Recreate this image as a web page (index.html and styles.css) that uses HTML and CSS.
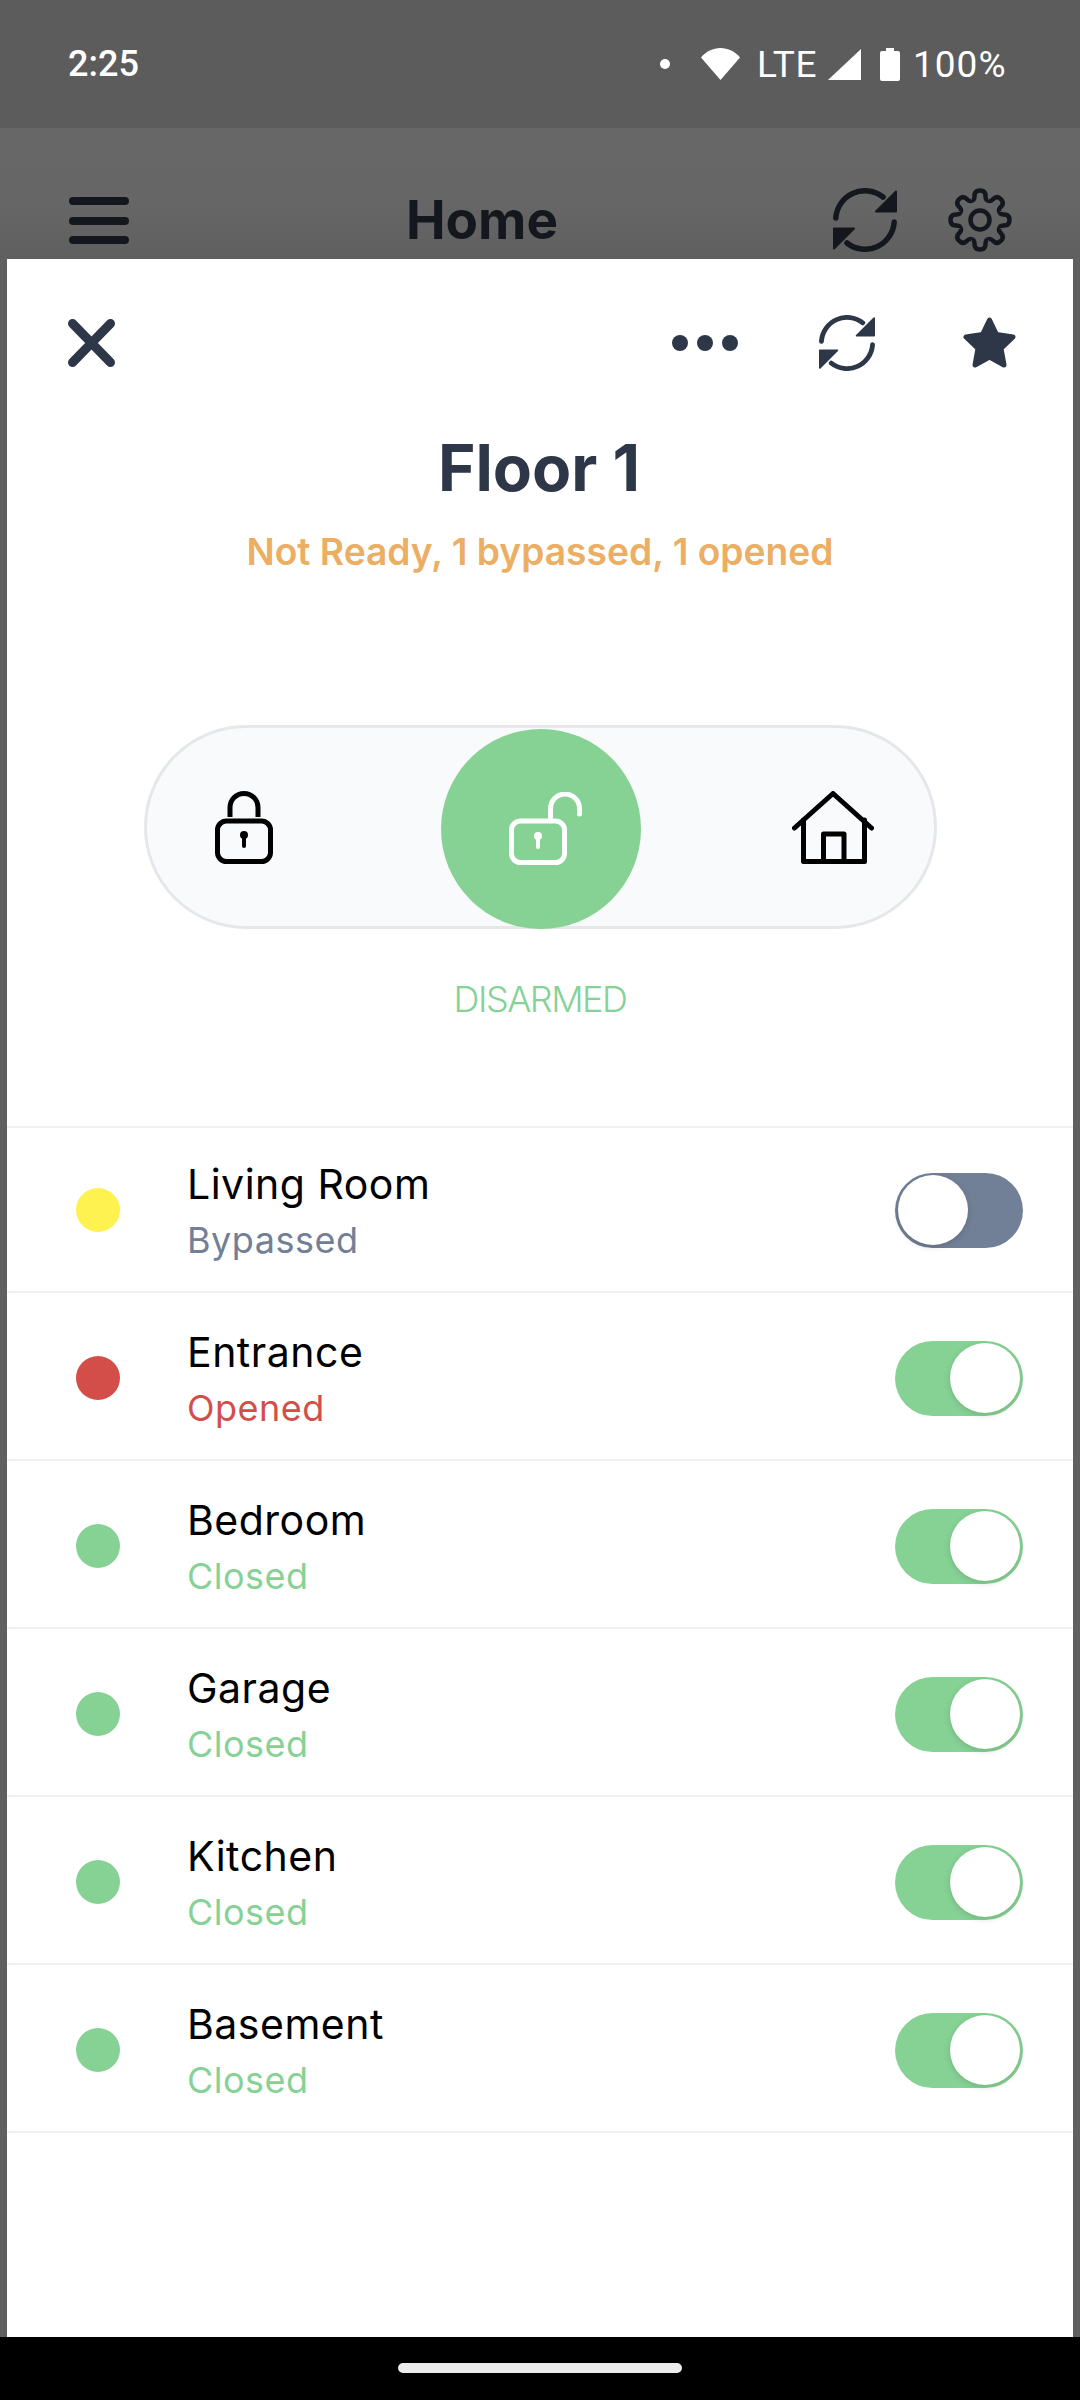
FILE: index.html
```html
<!DOCTYPE html>
<html lang="en">
<head>
<meta charset="utf-8">
<title>Floor 1</title>
<link rel="stylesheet" href="styles.css">
</head>
<body>
<div class="screen">
  <div class="statusbar">
    <span class="time">2:25</span>
    <div class="status-right">
      <span class="notif-dot"></span>
      <svg class="ic-wifi" viewBox="0 0 39 32"><path d="M19.5 32 0 9.5C5 3.500 12 0 19.500 0S34 3.500 39 9.500Z" fill="#fff"/></svg>
      <span class="lte">LTE</span>
      <svg class="ic-signal" viewBox="0 0 33 31"><path d="M33 0V31H0Z" fill="#fff"/></svg>
      <svg class="ic-battery" viewBox="0 0 20 33"><path d="M6 0h8v3h4a2 2 0 0 1 2 2v26a2 2 0 0 1-2 2H2a2 2 0 0 1-2-2V5a2 2 0 0 1 2-2h4Z" fill="#fff"/></svg>
      <span class="pct">100%</span>
    </div>
  </div>

  <div class="appbar">
    <div class="hamburger"><span></span><span></span><span></span></div>
    <span class="app-title">Home</span>
    <svg class="ic-sync-lg" viewBox="0 0 64 64"><use href="#sync"/></svg>
    <svg class="ic-gear" viewBox="0 0 64 64" fill="none" stroke="#14171e" stroke-width="4.500" stroke-linejoin="round">
      <circle cx="32" cy="32" r="9.500"/>
      <g id="gear-teeth">
        <path id="t" d="M24 12.600C26.500 12 26.500 10.500 26.500 8Q26.500 2.500 32 2.500T37.500 8C37.500 10.500 37.500 12 40 12.600"/>
        <use href="#t" transform="rotate(45 32 32)"/>
        <use href="#t" transform="rotate(90 32 32)"/>
        <use href="#t" transform="rotate(135 32 32)"/>
        <use href="#t" transform="rotate(180 32 32)"/>
        <use href="#t" transform="rotate(225 32 32)"/>
        <use href="#t" transform="rotate(270 32 32)"/>
        <use href="#t" transform="rotate(315 32 32)"/>
      </g>
    </svg>
  </div>

  <div class="sheet-wrap">
    <main class="sheet">
      <div class="toolbar">
        <svg class="ic-close" viewBox="0 0 47 48"><path d="M4.500 4.500 42.500 43.500M42.500 4.500 4.500 43.500" stroke="#2d3748" stroke-width="9" stroke-linecap="round"/></svg>
        <div class="dots"><span></span><span></span><span></span></div>
        <svg class="ic-sync" viewBox="0 0 64 64"><use href="#sync"/></svg>
        <svg class="ic-star" viewBox="0 0 53 51"><path d="M26.500 3 33.500 17.500 50 20 38 31.500 41 48 26.500 40 12 48 15 31.500 3 20 19.500 17.500Z" fill="#2d3748" stroke="#2d3748" stroke-width="5" stroke-linejoin="round"/></svg>
      </div>

      <h1 class="title">Floor 1</h1>
      <p class="subtitle">Not Ready, 1 bypassed, 1 opened</p>

      <div class="pill">
        <svg class="ic-lock" viewBox="0 0 58 73" fill="none" stroke="#000" stroke-width="5">
          <rect x="2.500" y="30" width="53" height="40.500" rx="9"/>
          <path d="M15 26V16.500a14 14 0 0 1 28 0V26" stroke-linecap="butt"/>
          <circle cx="29" cy="44" r="4" fill="#000" stroke="none"/>
          <path d="M29 45V55" stroke-width="4" stroke-linecap="round"/>
        </svg>
        <div class="pill-active">
          <svg class="ic-unlock" viewBox="0 0 74 73" fill="none" stroke="#fff" stroke-width="5">
            <rect x="2.500" y="29" width="53" height="41.500" rx="9"/>
            <path d="M41.500 25V16.500a14.500 14.500 0 0 1 29 0V22" stroke-linecap="round"/>
            <circle cx="29" cy="44" r="4" fill="#fff" stroke="none"/>
            <path d="M29 45V55" stroke-width="4" stroke-linecap="round"/>
          </svg>
        </div>
        <svg class="ic-home" viewBox="0 0 82 73" fill="none" stroke="#000" stroke-width="5" stroke-linejoin="round" stroke-linecap="round">
          <path d="M2.500 37 41 2.500 79.500 37"/>
          <path d="M11.500 29V70.500H72.500V29"/>
          <path d="M31.500 70.500V43H52V70.500"/>
        </svg>
      </div>
      <p class="mode">DISARMED</p>

      <ul class="zones">
        <li class="zone bypassed"><span class="dot"></span><div class="zone-text"><span class="zone-name">Living Room</span><span class="zone-state">Bypassed</span></div><span class="toggle"><span class="knob"></span></span></li>
        <li class="zone opened"><span class="dot"></span><div class="zone-text"><span class="zone-name">Entrance</span><span class="zone-state">Opened</span></div><span class="toggle"><span class="knob"></span></span></li>
        <li class="zone closed"><span class="dot"></span><div class="zone-text"><span class="zone-name">Bedroom</span><span class="zone-state">Closed</span></div><span class="toggle"><span class="knob"></span></span></li>
        <li class="zone closed"><span class="dot"></span><div class="zone-text"><span class="zone-name">Garage</span><span class="zone-state">Closed</span></div><span class="toggle"><span class="knob"></span></span></li>
        <li class="zone closed"><span class="dot"></span><div class="zone-text"><span class="zone-name">Kitchen</span><span class="zone-state">Closed</span></div><span class="toggle"><span class="knob"></span></span></li>
        <li class="zone closed"><span class="dot"></span><div class="zone-text"><span class="zone-name">Basement</span><span class="zone-state">Closed</span></div><span class="toggle"><span class="knob"></span></span></li>
      </ul>
    </main>
  </div>

  <div class="navbar"><span class="handle"></span></div>
</div>

<svg class="defs" width="0" height="0">
  <symbol id="sync" viewBox="0 0 64 64">
    <g fill="none" stroke="currentColor" stroke-width="5.500" stroke-linecap="round">
      <path d="M2.800 30A29.200 29.200 0 0 1 50 9"/>
      <path d="M61.200 34A29.200 29.200 0 0 1 14 55"/>
    </g>
    <g fill="currentColor" stroke="currentColor" stroke-width="2" stroke-linejoin="round">
      <path d="M63 3.500V23.500H43Z"/>
      <path d="M1 60.500V40.500H21Z"/>
    </g>
  </symbol>
</svg>
</body>
</html>
```
FILE: styles.css
```css
* { box-sizing: border-box; margin: 0; padding: 0; }
html, body { width: 1080px; height: 2400px; background: #000; overflow: hidden; }
body { font-family: "Inter", "Liberation Sans", sans-serif; }
.defs { position: absolute; }

.screen { width: 1080px; height: 2400px; display: flex; flex-direction: column; }

/* status bar */
.statusbar { height: 128px; background: #5c5c5c; color: #fff; display: flex; align-items: center; justify-content: space-between; padding: 0 76px 0 68px; font-family: "Roboto", sans-serif; font-size: 37px; }
.status-right { display: flex; align-items: center; }
.time { font-size: 36px; font-weight: 500; }
.notif-dot { width: 10px; height: 10px; border-radius: 50%; background: #fff; }
.ic-wifi { width: 39px; height: 32px; margin-left: 31px; }
.lte { margin-left: 17px; width: 60px; font-size: 37px; line-height: 1; letter-spacing: .7px; }
.ic-signal { width: 33px; height: 31px; margin-left: 11px; }
.ic-battery { width: 20px; height: 33px; margin-left: 19px; }
.pct { margin-left: 13px; width: 91px; line-height: 1; letter-spacing: 1px; }

/* dimmed app bar */
.appbar { height: 131px; flex: none; background: linear-gradient(#676767, #666 60%, #5f5f5f); display: flex; align-items: flex-start; padding: 60px 0 0 69px; overflow: hidden; color: #14171e; }
.hamburger { width: 60px; height: 47px; margin-top: 9px; display: flex; flex-direction: column; justify-content: space-between; }
.hamburger span { display: block; height: 8px; border-radius: 4px; background: #14171e; }
.app-title { margin-left: 277px; width: 151px; font-size: 53px; font-weight: 700; line-height: 64px; white-space: nowrap; }
.ic-sync-lg { width: 64px; height: 64px; margin-left: 276px; color: #14171e; }
.ic-gear { width: 64px; height: 64px; margin-left: 51px; }

/* sheet */
.sheet-wrap { flex: 1; background: #5f5f5f; padding: 0 7px; display: flex; min-height: 0; }
.sheet { flex: 1; background: #fff; display: flex; flex-direction: column; }

.toolbar { height: 167px; flex: none; display: flex; align-items: center; padding-left: 61px; color: #2d3748; }
.ic-close { width: 47px; height: 48px; }
.dots { display: flex; gap: 9px; margin-left: 557px; }
.dots span { width: 16px; height: 16px; border-radius: 50%; background: #2d3748; }
.ic-sync { width: 56px; height: 56px; margin-left: 81px; }
.ic-star { width: 53px; height: 51px; margin-left: 88px; }

.title { font-size: 64px; line-height: 84px; font-weight: 700; color: #2d3748; text-align: center; padding-right: 2px; }
.subtitle { margin-top: 12px; font-size: 37.2px; line-height: 60px; font-weight: 600; color: #ebae63; text-align: center; }

.pill { margin: 143px 0 0 137px; width: 793px; height: 204px; flex: none; border: 3px solid #e5e7eb; border-radius: 102px; background: #f9fafb; display: flex; align-items: flex-end; }
.ic-lock { width: 58px; height: 73px; margin-left: 68px; align-self: center; }
.pill-active { width: 200px; height: 200px; margin: 0 0 -3px 168px; border-radius: 50%; background: #86d295; display: flex; align-items: center; justify-content: center; }
.ic-unlock { width: 74px; height: 73px; margin: -2px 0 0 9px; }
.ic-home { width: 82px; height: 73px; margin-left: 151px; align-self: center; }

.mode { margin-top: 42px; font-size: 36px; font-weight: 300; line-height: 56px; color: #86d295; text-align: center; letter-spacing: -1.5px; }

.zones { list-style: none; margin-top: 99px; border-top: 2px solid #edf0f5; }
.zone { height: 168px; padding-top: 4px; border-bottom: 2px solid #edf0f5; display: flex; align-items: center; }
.zone:first-child { height: 165px; padding-top: 1px; }
.dot { width: 44px; height: 44px; border-radius: 50%; margin-left: 69px; flex: none; }
.zone-text { margin: 4px 0 0 67px; display: flex; flex-direction: column; }
.zone-name { font-size: 41px; line-height: 56px; color: #000; letter-spacing: .5px; }
.zone-state { font-size: 36px; line-height: 56px; letter-spacing: .5px; }

.toggle { margin: 0 50px 0 auto; width: 128px; height: 75px; border-radius: 38px; display: flex; align-items: center; padding: 0 3px; }
.knob { width: 70px; height: 70px; border-radius: 50%; background: #fff; box-shadow: 0 2px 6px rgba(0,0,0,.15); }

.bypassed .dot { background: #fdf250; }
.bypassed .zone-state { color: #718096; }
.bypassed .toggle { background: #718096; justify-content: flex-start; }
.opened .dot { background: #d34e49; }
.opened .zone-state { color: #d34e49; }
.opened .toggle, .closed .toggle { background: #86d295; justify-content: flex-end; }
.closed .dot { background: #86d295; }
.closed .zone-state { color: #86d295; }

/* nav */
.navbar { height: 63px; flex: none; background: #000; display: flex; justify-content: center; padding-top: 26px; }
.handle { width: 284px; height: 10px; border-radius: 5px; background: #ececec; }
```
